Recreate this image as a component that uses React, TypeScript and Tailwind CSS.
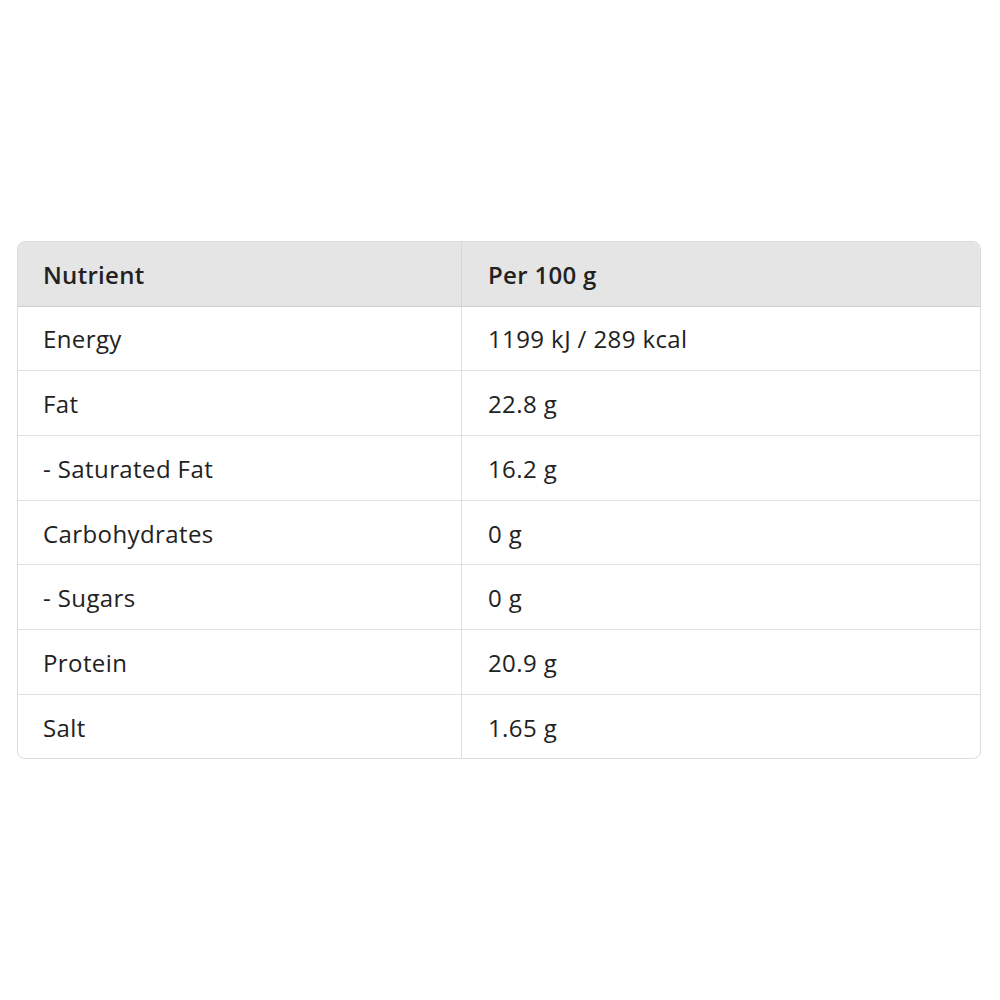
import React from "react";

const rows: [string, string][] = [
  ["Energy", "1199 kJ / 289 kcal"],
  ["Fat", "22.8 g"],
  ["- Saturated Fat", "16.2 g"],
  ["Carbohydrates", "0 g"],
  ["- Sugars", "0 g"],
  ["Protein", "20.9 g"],
  ["Salt", "1.65 g"],
];

export default function App() {
  return (
    <div
      className="w-[1000px] h-[1000px] bg-white flex items-center pl-[17px] text-[#222]"
      style={{ fontFamily: '"Open Sans", "Noto Sans", sans-serif' }}
    >
      <div className="w-[964px] border border-[#dcdcdc] rounded-[8px] overflow-hidden">
        <div className="grid grid-cols-[444px_1fr] h-[65px] bg-[#e5e5e5] border-b border-[#cfcfcf] text-[24px] tracking-[0.3px] font-semibold">
          <div className="flex items-center pl-[25px] pt-[2px] border-r border-[#d6d6d6]">Nutrient</div>
          <div className="flex items-center pl-[26px] pt-[2px]">Per 100 g</div>
        </div>
        {rows.map(([n, v], i) => (
          <div
            key={n}
            className={`grid grid-cols-[444px_1fr] ${i < rows.length - 1 ? "h-[64.7px] border-b border-[#e0e0e0]" : "h-[63.7px]"} text-[24px] tracking-[0.4px]`}
          >
            <div className="flex items-center pl-[25px] pt-[2px] border-r border-[#e0e0e0]">{n}</div>
            <div className="flex items-center pl-[26px] pt-[2px]">{v}</div>
          </div>
        ))}
      </div>
    </div>
  );
}
